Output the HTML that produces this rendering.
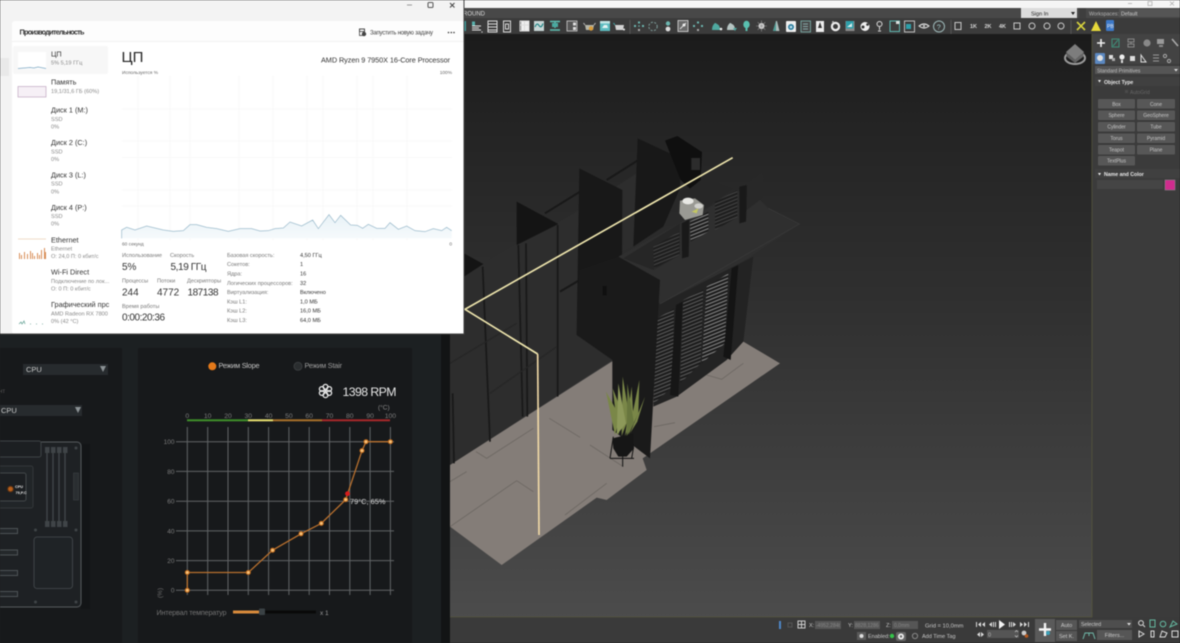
<!DOCTYPE html>
<html><head><meta charset="utf-8"><style>
html,body{margin:0;padding:0;width:1180px;height:643px;overflow:hidden;background:#222}
svg{display:block;filter:blur(.4px)}
text{font-family:"Liberation Sans",sans-serif}
</style></head><body>
<svg width="1180" height="643" viewBox="0 0 1180 643" xmlns="http://www.w3.org/2000/svg">
<defs>
<linearGradient id="vp" x1="0" y1="0" x2="0" y2="1"><stop offset="0" stop-color="#1b1b1b"/><stop offset=".156" stop-color="#242424"/><stop offset=".465" stop-color="#303030"/><stop offset="1" stop-color="#4c4c4c"/></linearGradient>
<pattern id="lv" width="14" height="10" patternUnits="userSpaceOnUse" patternTransform="rotate(-22)"><rect width="14" height="10" fill="#1c1c1c"/><rect y="3" width="14" height="3" fill="#5e5e5e"/></pattern>
<pattern id="lvb" width="14" height="10" patternUnits="userSpaceOnUse" patternTransform="rotate(-22)"><rect width="14" height="10" fill="#1c1c1c"/><rect y="3" width="14" height="3" fill="#8c8c8c"/></pattern>
<pattern id="lv2" width="14" height="10" patternUnits="userSpaceOnUse" patternTransform="rotate(-22)"><rect width="14" height="10" fill="#1e1e1e"/><rect y="3" width="14" height="3" fill="#464646"/></pattern>
<linearGradient id="cpuf" x1="0" y1="0" x2="0" y2="1"><stop offset="0" stop-color="#e8f2f7"/><stop offset="1" stop-color="#f6fafc"/></linearGradient>
</defs>

<!-- VIEWPORT -->
<rect x="450" y="34" width="642" height="583" fill="url(#vp)"/>
<g transform="translate(450,130) scale(.33333)">
 <polygon points="0,600 0,1005 487,690 380,615 388,420 550,350 560,130 388,240 320,280 200,340 100,400 42,440" fill="#2d2d2d"/>
 <polygon points="0,1005 485,695 880,635 990,700 578,985 590,1020 470,1110 440,1103 155,1305 0,1190" fill="#847d78"/>
 <g fill="none" stroke="#6c6762" stroke-width="2.500">
  <path d="M78,965 L110,985 L250,895"/><path d="M298,865 L390,922"/><path d="M420,945 L520,1010"/><path d="M200,1052 L250,1085"/><path d="M200,1052 L0,1190"/><path d="M612,890 L675,878"/><path d="M770,735 L815,748 L880,700"/><path d="M0,1055 L50,1025"/><path d="M345,1155 L470,1060"/>
 </g>
 <!-- fins/door lines -->
 <polygon points="200,215 325,282 200,345" fill="#141414"/>
 <polygon points="42,370 100,402 42,440" fill="#141414"/>
 <path d="M285,250 L390,185 M470,150 L565,90 M330,485 L440,420" stroke="#181818" stroke-width="6" fill="none"/>
 <path d="M323,285 L323,800 M205,345 L218,860 M228,340 L232,860 M98,410 L120,935 M8,790 L12,1000" stroke="#181818" stroke-width="5" fill="none"/>
 <path d="M0,700 L200,580 M120,790 L320,650" stroke="#262626" stroke-width="4" fill="none"/>
 <polygon points="388,115 517,180 515,690 380,615" fill="#181818"/>
 <polygon points="563,25 692,85 690,175 640,290 550,350" fill="#181818"/>
 <!-- wall under slab -->
 <polygon points="620,520 870,400 910,380 880,635 830,690 680,800 610,830" fill="#232323"/>
 <polygon points="622,565 672,535 668,770 610,822" fill="url(#lv)"/>
 <polygon points="700,510 760,478 752,700 690,760" fill="url(#lv)"/>
 <polygon points="770,470 835,430 825,640 755,700" fill="url(#lvb)"/>
 <polygon points="845,415 865,405 842,690 820,680" fill="#141414"/>
 <polygon points="678,525 698,515 685,800 660,795" fill="#161616"/>
 <!-- balcony floor -->
 <polygon points="690,185 760,145 850,175 780,225 690,265" fill="#272727"/>
 <!-- slab -->
 <polygon points="505,380 890,170 955,235 1048,282 870,400 630,522" fill="#2f2f2f"/>
 <path d="M955,235 L1048,282 L630,522" fill="none" stroke="#3b3b3b" stroke-width="2"/>
 <!-- parapets -->
 <polygon points="520,385 690,280 690,375 610,420" fill="#262626"/>
 <polygon points="720,275 775,245 775,305 722,335" fill="url(#lvb)"/>
 <polygon points="795,215 862,180 862,262 795,300" fill="url(#lv2)"/>
 <polygon points="610,350 688,305 688,375 612,415" fill="url(#lv2)"/>
 <polygon points="695,280 718,268 716,380 696,385" fill="#191919"/>
 <polygon points="868,170 892,165 888,275 868,280" fill="#191919"/>
 <polygon points="890,165 938,125 936,205 890,240" fill="#282828"/>
 <!-- pillar -->
 <polygon points="505,380 630,450 600,985 487,900 487,690 380,615 388,420" fill="#1a1a1a"/>
 <rect x="458" y="468" width="12" height="28" fill="#101010"/>
 <!-- PC -->
 <polygon points="645,32 682,18 756,66 752,150 720,176 692,150" fill="#0f0f0f"/>
 <rect x="724" y="84" width="26" height="36" fill="#333" opacity=".8"/>
 <!-- white box -->
 <polygon points="690,212 735,205 762,225 758,255 705,270 688,250" fill="#9a9a94"/>
 <ellipse cx="714" cy="213" rx="17" ry="10" fill="#e8e8e4"/>
 <ellipse cx="746" cy="228" rx="13" ry="8" fill="#d0d0cc"/>
 <polygon points="725,245 745,235 740,250" fill="#c4c860"/>
 <!-- plant -->
 <path d="M490,920 L480,985 M550,955 L545,985 M518,975 L518,1010 M480,985 L552,985" stroke="#111" stroke-width="3" fill="none"/>
 <polygon points="487,925 550,910 552,955 530,980 505,980 490,955" fill="#161616"/>
 <g fill="#7a8748">
  <polygon points="495,915 468,785 510,860"/><polygon points="505,915 488,775 522,860"/><polygon points="515,918 518,740 538,860"/>
  <polygon points="525,918 545,770 550,860"/><polygon points="535,915 568,750 565,850"/><polygon points="540,910 585,800 562,875"/>
  <polygon points="500,915 505,760 528,880" fill="#8d995a"/><polygon points="530,918 532,760 552,880" fill="#68763e"/>
 </g>
 <!-- beam line -->
 <polyline points="848,83 45,538 263,672" fill="none" stroke="#efe6ae" stroke-width="5"/>
 <polyline points="263,672 267,1215" fill="none" stroke="#efd8a6" stroke-width="5"/>
</g>

<!-- ViewCube -->
<ellipse cx="1075" cy="58" rx="10" ry="6" fill="none" stroke="#9a9a9a" stroke-width="2"/>
<polygon points="1075,44 1084,52 1075,60 1066,52" fill="#7d7d7d"/>
<polygon points="1066,52 1075,60 1075,63 1067,57" fill="#5e5e5e"/><polygon points="1084,52 1075,60 1075,63 1083,57" fill="#666"/>

<!-- TOP BARS -->
<rect x="450" y="0" width="730" height="8" fill="#f5f5f5"/>
<rect x="450" y="8" width="730" height="10" fill="#484848"/>
<rect x="450" y="18" width="730" height="16" fill="#3b3b3b"/>
<text x="463" y="15.5" font-size="6" fill="#d8d8d8">ROUND</text>
<rect x="1021" y="8" width="56" height="10" fill="#dcdcdc"/>
<text x="1031" y="15.5" font-size="5.6" fill="#222">Sign In</text>
<polygon points="1071,12 1075,12 1073,15" fill="#222"/>
<rect x="1079" y="8" width="7" height="10" fill="#3e3e3e"/>
<text x="1089" y="15.5" font-size="5.2" fill="#b8b8b8">Workspaces:</text>
<rect x="1119" y="9" width="61" height="8" fill="#555"/>
<text x="1121" y="15.5" font-size="5.2" fill="#ccc">Default</text>
<rect x="1148" y="1.5" width="4" height="4" fill="none" stroke="#aaa" stroke-width=".7"/>
<path d="M1170,1.5 l4,4 M1174,1.5 l-4,4 M1128,3.5 h4" stroke="#aaa" stroke-width=".7"/>

<!-- toolbar icons -->
<g>
 <rect x="460" y="21" width="6" height="10" fill="#3f9a98"/>
 <rect x="472" y="21.5" width="3" height="4" fill="#58b0ac"/><path d="M472,26 h9 M472,28 h7 M472,30 h9" stroke="#e8e8e8" stroke-width="1.1"/>
 <circle cx="482" cy="32" r=".6" fill="#eee"/>
 <g fill="none" stroke="#dcdcdc" stroke-width="1">
  <rect x="488" y="21" width="9" height="11"/><path d="M488,24 h9 M488,27 h9 M488,30 h9"/>
  <rect x="503.5" y="21" width="7" height="11"/><rect x="505.5" y="24" width="3" height="5"/>
  <rect x="520" y="21" width="9" height="10" fill="#444"/><path d="M524.5,21 v10 M520,25 h9"/>
 </g>
 <rect x="521" y="21.5" width="3" height="3" fill="#eee"/><rect x="525" y="21.5" width="3.5" height="3" fill="#eee"/><rect x="521" y="25.5" width="3" height="5" fill="#eee"/><rect x="525" y="25.5" width="3.5" height="5" fill="#eee"/>
 <rect x="534" y="21" width="10" height="10" fill="#c8d6d6"/><path d="M535,27 q2,-5 4,-1.5 t4,-2" stroke="#178080" fill="none" stroke-width="1.1"/>
 <path d="M550,21.5 h10 M555,22 v6 M550,30 h10" stroke="#5ec0b4" stroke-width="1.4"/><rect x="552" y="23" width="6" height="4" fill="#4aa9a0"/>
 <rect x="567" y="21" width="10" height="10" fill="#565656" stroke="#cfcfcf" stroke-width=".8"/><rect x="573" y="22.5" width="3" height="3" fill="#ddd"/><rect x="573" y="27" width="3" height="3" fill="#ddd"/>
 <path d="M585,25 h9 l-1,5 h-7z" fill="#b5b5a8"/><circle cx="591" cy="28.5" r="2.2" fill="#d89c3a"/><path d="M585,25 l-1.5,-2 M594,25 l1.5,-2" stroke="#bbb"/>
 <rect x="600" y="21" width="10" height="10" fill="#5cbcc0"/><rect x="600" y="21" width="10" height="2.5" fill="#bfe4e4"/><path d="M602,28 h6 l-1,-3 h-3z" fill="#e4f3f3"/>
 <path d="M615,25 h9 l-1,5 h-7z" fill="#d4d4d4"/><path d="M615,25 l-1.5,-2" stroke="#4aa"/><circle cx="624" cy="29.5" r="1" fill="#eee"/>
 <path d="M630,20 v14" stroke="#555"/>
 <g fill="#6cb6b0">
  <rect x="638" y="21.5" width="2" height="2"/><rect x="634" y="25" width="2" height="2"/><rect x="642" y="25" width="2" height="2"/><rect x="638" y="29" width="2" height="2" fill="#aaa"/><circle cx="639" cy="26" r=".8"/>
  <circle cx="668" cy="23.5" r="2.2"/><circle cx="668" cy="29" r="2.4" fill="#ddd"/>
  <rect x="697" y="21.5" width="2" height="2"/><rect x="693" y="25" width="2" height="2"/><rect x="701" y="25" width="2" height="2"/><rect x="697" y="29" width="2" height="2" fill="#aaa"/>
 </g>
 <circle cx="653" cy="26.5" r="4.2" fill="none" stroke="#7f9f9c" stroke-dasharray="2 1.5"/>
 <rect x="678" y="20.5" width="10" height="11" fill="#6a6a6a" stroke="#ddd" stroke-width=".8"/><path d="M680,29 l6,-6" stroke="#ddd"/><circle cx="684" cy="25" r="1.5" fill="#eee"/>
 <path d="M712,30 q0,-4 2,-6 q1,-2 3,0 q3,1 3,6z" fill="#4fa9a0"/><circle cx="721" cy="29" r="1.3" fill="#eee"/>
 <path d="M727,30 q0,-4 2,-6 q1,-2 3,0 q3,1 3,6z" fill="#b5c4c2"/><path d="M733,28 l4,0 -2,3z" fill="#4fa9a0"/>
 <ellipse cx="746.5" cy="24.5" rx="3.2" ry="3.8" fill="#59c0b0"/><rect x="745.5" y="28" width="2" height="3" fill="#59c0b0"/>
 <circle cx="761.5" cy="26" r="3" fill="#e4e4e4"/><path d="M761.5,20.5 v11 M756,26 h11 M757.7,22.2 l7.6,7.6 M765.3,22.2 l-7.6,7.6" stroke="#999" stroke-width=".6"/>
 <path d="M773,31 l3,-10 l1,0 l2.5,10z" fill="#aebdbb"/><path d="M773,31 l3,-10 v10z" fill="#4b9a93"/>
 <rect x="786" y="21" width="10" height="11" fill="#eee" rx="1"/><circle cx="791" cy="27" r="3" fill="#2f7f9f"/><circle cx="791" cy="27" r="1.3" fill="#bfe0ee"/>
 <rect x="801" y="21" width="9.5" height="11" fill="#484848" stroke="#7fb5ae" stroke-width=".8"/><path d="M803,24 h5 M803,26.5 h5 M803,29 h5" stroke="#8aa"/>
 <path d="M816,21 h8 v11 h-8z" fill="#eee"/><path d="M820,22 l2,6 h-4z" fill="#333"/>
 <circle cx="835.5" cy="26.5" r="3.6" fill="none" stroke="#eee" stroke-width="2.2"/><circle cx="833" cy="22" r="1" fill="#bbb"/>
 <rect x="845.5" y="21" width="9" height="10" fill="#8a8a8a"/><rect x="846" y="21" width="7.5" height="7.5" fill="#2d9faa"/><path d="M847,27 l5,-4 v4z" fill="#d8eeee"/>
 <circle cx="865" cy="26.5" r="4.5" fill="#eee"/><circle cx="863" cy="27" r="1.5" fill="#333"/><circle cx="867.5" cy="24.5" r="1.3" fill="#333"/>
 <circle cx="879.5" cy="24" r="2.5" fill="none" stroke="#ddd"/><path d="M879.5,27 v3 M878,31 h3" stroke="#ddd"/>
 <rect x="890" y="21" width="9.5" height="10.5" fill="#3d3d3d" stroke="#5db5ae"/><rect x="896" y="21" width="3.5" height="3" fill="#ddd"/>
 <rect x="904.5" y="21" width="10" height="11" fill="none" stroke="#ddd" stroke-width=".8"/><rect x="906" y="24" width="5" height="5" fill="#2d9faa"/>
 <path d="M919,26 q5,-4 10,0 q-5,4 -10,0z" fill="none" stroke="#ddd" stroke-width="1.1"/><circle cx="924" cy="26" r="1" fill="#ddd"/>
 <circle cx="939" cy="26.5" r="5.5" fill="none" stroke="#9db8b8"/><text x="936.6" y="29.5" font-size="7.5" fill="#9fc8c8">?</text>
 <path d="M951,20 v14" stroke="#555"/>
 <g font-size="5.5" fill="#d8d8d8" font-weight="bold">
  <text x="970" y="28">1K</text><text x="984.5" y="28">2K</text><text x="999" y="28">4K</text>
 </g>
 <g fill="none" stroke="#c8c8c8">
  <rect x="955" y="22.5" width="6" height="7"/><rect x="1014" y="23" width="6" height="6"/>
  <circle cx="1032" cy="26" r="3"/><circle cx="1047" cy="26" r="3"/><circle cx="1061" cy="26" r="3"/>
 </g>
 <path d="M1071,20 v14" stroke="#555"/>
 <path d="M1077,22 l8,8 M1085,22 l-8,8" stroke="#d6d23e" stroke-width="1.6"/>
 <polygon points="1096,21 1101,31 1091,31" fill="#e6d83a"/>
 <rect x="1106" y="20" width="8" height="11" rx="1" fill="#3c78c8"/><text x="1107" y="28" font-size="5" fill="#eee">PB</text>
</g>

<!-- RIGHT PANEL -->
<rect x="1092" y="34" width="88" height="583" fill="#3b3b3b"/>
<rect x="1092" y="34" width="88" height="30" fill="#434343"/>
<path d="M1097,43 h8 M1101,39 v8" stroke="#f0f0f0" stroke-width="1.6"/>
<rect x="1112" y="39" width="7" height="8" fill="none" stroke="#3f8f7a"/><path d="M1113,46 l5,-6" stroke="#3f8f7a"/>
<path d="M1128,39 h6 v3 h-6z M1131,42 v2 M1128,44 h6 v3 h-6z" fill="none" stroke="#888"/>
<circle cx="1147" cy="43" r="3.6" fill="#888"/>
<rect x="1157" y="39" width="7" height="5" fill="#999"/><rect x="1159" y="45" width="4" height="2" fill="#888"/>
<path d="M1172,39 l6,7" stroke="#aaa" stroke-width="1.6"/>
<rect x="1095" y="53" width="10" height="11" rx="1" fill="#5b88c0"/><circle cx="1100" cy="58" r="3" fill="#e0e0e0"/>
<rect x="1109" y="55" width="4" height="4" fill="#ddd"/><rect x="1112" y="58" width="3" height="3" fill="#aaa"/>
<circle cx="1122" cy="57" r="2.6" fill="#eee"/><rect x="1121" y="60" width="2" height="3" fill="#ddd"/>
<rect x="1130" y="56" width="5" height="5" fill="#ddd"/>
<path d="M1141,62 v-7 l5,7z" fill="none" stroke="#ddd"/>
<path d="M1153,55 h6 M1153,58 h6 M1153,61 h6" stroke="#999"/>
<circle cx="1165" cy="56" r="1.6" fill="none" stroke="#aaa"/><circle cx="1169" cy="61" r="1.6" fill="none" stroke="#aaa"/>
<rect x="1095" y="66" width="85" height="8" fill="#555"/>
<text x="1097" y="72.3" font-size="5" fill="#c0c0c0">Standard Primitives</text>
<polygon points="1174,69 1178,69 1176,71.5" fill="#ddd"/>
<rect x="1095" y="77" width="85" height="9" fill="#404040"/>
<polygon points="1098,80 1101,80 1099.5,82.5" fill="#eee"/>
<text x="1104" y="84" font-size="5.2" font-weight="bold" fill="#e8e8e8">Object Type</text>
<rect x="1125" y="90" width="3" height="3" fill="#4a4a4a"/>
<text x="1130" y="94" font-size="5" fill="#666">AutoGrid</text>
<g fill="#575757">
 <rect x="1098" y="99" width="37" height="9.5" rx="1"/><rect x="1137" y="99" width="38" height="9.5" rx="1"/>
 <rect x="1098" y="110.5" width="37" height="9.5" rx="1"/><rect x="1137" y="110.5" width="38" height="9.5" rx="1"/>
 <rect x="1098" y="122" width="37" height="9.5" rx="1"/><rect x="1137" y="122" width="38" height="9.5" rx="1"/>
 <rect x="1098" y="133.5" width="37" height="9.5" rx="1"/><rect x="1137" y="133.5" width="38" height="9.5" rx="1"/>
 <rect x="1098" y="145" width="37" height="9.5" rx="1"/><rect x="1137" y="145" width="38" height="9.5" rx="1"/>
 <rect x="1098" y="156" width="37" height="9.5" rx="1"/>
</g>
<g font-size="5" fill="#c8c8c8" text-anchor="middle">
 <text x="1116.5" y="106">Box</text><text x="1156" y="106">Cone</text>
 <text x="1116.5" y="117">Sphere</text><text x="1156" y="117">GeoSphere</text>
 <text x="1116.5" y="128.5">Cylinder</text><text x="1156" y="128.5">Tube</text>
 <text x="1116.5" y="140">Torus</text><text x="1156" y="140">Pyramid</text>
 <text x="1116.5" y="151.5">Teapot</text><text x="1156" y="151.5">Plane</text>
 <text x="1116.5" y="162.5">TextPlus</text>
</g>
<rect x="1095" y="169" width="85" height="9" fill="#404040"/>
<polygon points="1098,173 1101,173 1099.5,175.5" fill="#eee"/>
<text x="1104" y="176" font-size="5.2" font-weight="bold" fill="#e8e8e8">Name and Color</text>
<rect x="1097" y="180" width="66" height="9" fill="#454545"/>
<rect x="1165" y="180" width="10" height="10" fill="#d02c8e" stroke="#888" stroke-width=".6"/>

<!-- STATUS BAR -->
<rect x="450" y="617" width="730" height="26" fill="#3a3a3a"/>
<path d="M450,617 H1092 V34" fill="none" stroke="#56563c" stroke-width=".8"/>
<rect x="779" y="621" width="2" height="8" fill="#4f86c6"/>
<rect x="788" y="623" width="4" height="4" fill="none" stroke="#555"/>
<rect x="798" y="621" width="7" height="7" fill="none" stroke="#ccc"/><path d="M801.5,621 v7 M798,624.5 h7" stroke="#ccc"/>
<g font-size="5.5" fill="#c8c8c8">
 <text x="809" y="627">X:</text><text x="848" y="627">Y:</text><text x="886" y="627">Z:</text>
 <text x="925" y="627.5" font-size="5.8">Grid = 10,0mm</text>
 <text x="868" y="638">Enabled:</text><text x="922" y="638">Add Time Tag</text>
</g>
<g fill="#565656"><rect x="815" y="621" width="26" height="8"/><rect x="854" y="621" width="26" height="8"/><rect x="892" y="621" width="26" height="8"/></g>
<g font-size="5" fill="#888"><text x="816" y="627">-4952,284t</text><text x="855" y="627">8828,1286</text><text x="894" y="627">0,0mm</text></g>
<rect x="857" y="632" width="9" height="8" fill="#5a5a5a"/><circle cx="861.5" cy="636" r="2" fill="#ddd"/>
<circle cx="892" cy="636" r="2.2" fill="#35c24a"/>
<rect x="896" y="632" width="10" height="9" rx="2" fill="#666"/><circle cx="901" cy="636.5" r="3" fill="#eee"/><circle cx="901" cy="636.5" r="1.2" fill="#666"/>
<circle cx="915" cy="636" r="2.6" fill="none" stroke="#888"/>
<g fill="#ddd">
 <path d="M976,622 h1 v5 h-1z M978,624.5 l3,-2.5 v5z M985,622 v5 l-3,-2.5z"/>
 <path d="M989,624.5 l3,-2.5 v5z M993,622 h1 v5 h-1z M995,622 h1 v5 h-1z"/>
 <polygon points="999,620 1005,624.5 999,629" fill="#f2f2f2"/>
 <path d="M1009,622 h1 v5 h-1z M1011,622 h1 v5 h-1z M1013,622 l3,2.5 -3,2.5z"/>
 <path d="M1020,622 v5 l3,-2.5z M1024,622 l3,2.5 -3,2.5z M1028,622 h1 v5 h-1z"/>
 <path d="M977,634.5 l3,-2.5 v5z M981,632 l3,2.5 -3,2.5z"/>
</g>
<rect x="987" y="630" width="32" height="8" fill="#555"/>
<text x="988" y="636.5" font-size="5.5" fill="#bbb">0</text>
<path d="M1015,632 l1.5,-1.5 1.5,1.5 M1015,635.5 l1.5,1.5 1.5,-1.5" stroke="#ccc" fill="none" stroke-width=".7"/>
<circle cx="1024" cy="633" r="2.4" fill="#ccc"/><circle cx="1026.5" cy="636" r="1.8" fill="#b85a20"/>
<rect x="1035" y="619" width="20" height="23" fill="#5a5a5a"/>
<path d="M1039,629.5 h12 M1045,623 v13" stroke="#f4f4f4" stroke-width="2.4"/>
<circle cx="1048" cy="633" r="2" fill="#3aa0b8"/>
<g fill="#565656"><rect x="1056" y="620" width="21" height="10"/><rect x="1056" y="631" width="21" height="10"/><rect x="1097" y="630" width="35" height="10"/></g>
<rect x="1079" y="620" width="53" height="8" fill="#4e4e4e"/>
<text x="1066.5" y="627" font-size="5.5" fill="#ccc" text-anchor="middle">Auto</text>
<text x="1066.5" y="638" font-size="5.5" fill="#ccc" text-anchor="middle">Set K.</text>
<text x="1081" y="626" font-size="5.2" fill="#ccc">Selected</text>
<polygon points="1127,623 1131,623 1129,625.5" fill="#ddd"/>
<text x="1114.5" y="637" font-size="5.5" fill="#ccc" text-anchor="middle">Filters...</text>
<path d="M1083,639 l2,-6 h8 l2,6 M1089,633 v3" fill="none" stroke="#6fb8a8"/>
<g fill="none" stroke="#ddd">
 <circle cx="1141" cy="623" r="2.4"/><path d="M1143,625 l2,2"/>
 <path d="M1150,620 h5 v7 h-5z" stroke="#65b8a0"/><circle cx="1163" cy="624" r="2.8" stroke="#65b8a0"/><path d="M1170,627 l3,-6 4,3z" stroke="#65b8a0"/>
 <path d="M1139,631 l5,3 -5,3z"/><path d="M1151,631 v6 h3 v-6z"/><path d="M1160,637 l2,-6 5,2 -2,4z"/><rect x="1172" y="631" width="6" height="6"/>
</g>

<!-- LEFT BOTTOM PANEL -->
<rect x="0" y="334" width="450" height="309" fill="#1c2022"/>
<rect x="0" y="348" width="122" height="295" fill="#17191b"/>
<rect x="138" y="348" width="274" height="295" fill="#17191b"/>
<rect x="441" y="334" width="9" height="309" fill="#121415"/>
<rect x="23" y="364" width="85" height="11" fill="#272b2e"/>
<text x="26" y="372" font-size="7.5" fill="#c9c9c9">CPU</text>
<polygon points="100,366 106,366 103,372" fill="#8b9194"/>
<text x="-1" y="393" font-size="6" fill="#555">нт</text>
<rect x="0" y="405" width="82" height="11" fill="#272b2e"/>
<text x="1" y="413" font-size="7.5" fill="#c9c9c9">CPU</text>
<polygon points="75,407 81,407 78,413" fill="#8b9194"/>
<!-- motherboard -->
<rect x="81" y="444" width="9" height="165" fill="#131517"/>
<rect x="-10" y="442" width="91" height="165" rx="4" fill="#1e2124" stroke="#565b5e" stroke-width="1"/>
<rect x="-6" y="441" width="47" height="16" rx="2" fill="#1c1f22" stroke="#3e4346"/>
<rect x="-6" y="466" width="39" height="42" rx="2" fill="#212528" stroke="#333739"/>
<rect x="-6" y="473" width="32" height="28" rx="2" fill="#1c1f22" stroke="#42474a"/>
<circle cx="10.5" cy="489" r="2.8" fill="#b8601c" stroke="#5d3212" stroke-width="1"/>
<text x="15" y="488" font-size="3.8" fill="#e8e8e8" font-weight="bold">CPU</text>
<text x="15.5" y="494" font-size="3.8" fill="#e8e8e8" font-weight="bold">79,P.C</text>
<g stroke="#43484b" fill="none">
 <path d="M47,447 V526 M53,447 V526 M59,447 V526 M65,447 V526" stroke-width="1.3"/>
</g>
<g fill="#3f4447">
 <rect x="45" y="447" width="4.5" height="6"/><rect x="51" y="447" width="4.5" height="6"/><rect x="57" y="447" width="4.5" height="6"/><rect x="63" y="447" width="4.5" height="6"/>
 <rect x="45" y="521" width="4.5" height="6"/><rect x="51" y="521" width="4.5" height="6"/><rect x="57" y="521" width="4.5" height="6"/><rect x="63" y="521" width="4.5" height="6"/>
 <circle cx="76" cy="448" r="1.5"/><circle cx="76" cy="530" r="1.5"/><circle cx="35.5" cy="530" r="1.5"/><circle cx="35.5" cy="602" r="1.5"/><circle cx="76" cy="602" r="1.5"/>
</g>
<rect x="73.5" y="473" width="5" height="27" fill="#2a2e31" stroke="#3f4447" stroke-width=".5"/>
<g fill="#24282b" stroke="#4d5255" stroke-width="1">
 <rect x="-5" y="528.5" width="22.5" height="5"/><rect x="-5" y="550" width="22.5" height="5"/><rect x="-5" y="570.5" width="22.5" height="5"/><rect x="-5" y="591.5" width="22.5" height="5"/>
</g>
<rect x="34" y="537" width="38.5" height="51.5" rx="3" fill="#1f2326" stroke="#474c50" stroke-width=".8"/>

<!-- Mode -->
<circle cx="212.3" cy="366.3" r="4" fill="#e4791a"/>
<text x="218.5" y="368" font-size="7.3" fill="#c4c4c4" textLength="41">Режим Slope</text>
<circle cx="298" cy="366.3" r="4" fill="#2a2d2f" stroke="#3a3d3f"/>
<text x="304.5" y="368" font-size="7.3" fill="#9c9c9c" textLength="37.5">Режим Stair</text>
<!-- fan -->
<g fill="none" stroke="#ededed" stroke-width="1.3">
 <circle cx="325.5" cy="386.8" r="2.4"/><circle cx="325.5" cy="395.2" r="2.4"/><circle cx="321.8" cy="389" r="2.4"/><circle cx="329.2" cy="389" r="2.4"/><circle cx="321.8" cy="393" r="2.4"/><circle cx="329.2" cy="393" r="2.4"/>
</g>
<circle cx="325.5" cy="391" r="1.2" fill="#ededed"/>
<text x="342.5" y="396" font-size="12.3" fill="#e6e6e6" textLength="54">1398 RPM</text>

<!-- chart -->
<text x="378" y="409.5" font-size="6.5" fill="#8a8a8a">(°C)</text>
<g font-size="6.8" fill="#7c7c7c" text-anchor="middle">
 <text x="187.3" y="418">0</text><text x="207.7" y="418">10</text><text x="228" y="418">20</text><text x="248.3" y="418">30</text><text x="268.6" y="418">40</text><text x="288.9" y="418">50</text><text x="309.2" y="418">60</text><text x="329.5" y="418">70</text><text x="349.8" y="418">80</text><text x="370.1" y="418">90</text><text x="390.4" y="418">100</text>
</g>
<rect x="187" y="419.3" width="61" height="2" fill="#3f8f2a"/>
<rect x="248" y="419.3" width="25" height="2" fill="#e8e070"/>
<rect x="273" y="419.3" width="49" height="2" fill="#a8702a"/>
<rect x="322" y="419.3" width="68" height="2" fill="#a8282a"/>
<g stroke="#626567" stroke-width="1">
 <path d="M187.3,427V595M207.7,427V595M228,427V595M248.3,427V595M268.6,427V595M288.9,427V595M309.2,427V595M329.5,427V595M349.8,427V595M370.1,427V595M390.4,427V595"/>
 <path d="M176,441.7H394M176,471.4H394M176,501.2H394M176,530.9H394M176,560.6H394M176,590.3H394"/>
</g>
<g font-size="6.5" fill="#7c7c7c" text-anchor="end">
 <text x="174.5" y="444">100</text><text x="174.5" y="473.8">80</text><text x="174.5" y="503.5">60</text><text x="174.5" y="533.3">40</text><text x="174.5" y="563">20</text><text x="174.5" y="592.7">0</text>
</g>
<text transform="translate(162,598) rotate(-90)" font-size="6.5" fill="#6a6a6a">(%)</text>
<polyline points="187.3,590.3 187.3,572.5 248.3,572.5 272.6,550.2 301,533.8 321.3,523.4 345.7,499.6 362,450.6 366,441.7 390.4,441.7" fill="none" stroke="#b8702e" stroke-width="1.3"/>
<g fill="#f6c27a" stroke="#c36a1a" stroke-width="1">
 <circle cx="187.3" cy="590.3" r="2"/><circle cx="187.3" cy="572.5" r="2"/><circle cx="248.3" cy="572.5" r="2"/><circle cx="272.6" cy="550.2" r="2"/><circle cx="301" cy="533.8" r="2"/><circle cx="321.3" cy="523.4" r="2"/><circle cx="345.7" cy="499.6" r="2"/><circle cx="362" cy="450.6" r="2"/><circle cx="366" cy="441.7" r="2"/><circle cx="390.4" cy="441.7" r="2"/>
</g>
<circle cx="347.5" cy="493.7" r="2.4" fill="#d81c1c"/>
<text x="350" y="504" font-size="7.4" fill="#dcdcdc">79°C, 65%</text>
<!-- slider -->
<text x="156.5" y="615" font-size="7.2" fill="#747474" textLength="70">Интервал температур</text>
<rect x="233" y="610.5" width="83" height="3" fill="#0a0a0a"/>
<rect x="233" y="610.5" width="27" height="3" fill="#d88a3c"/>
<rect x="259" y="608.5" width="6" height="6.5" rx="1" fill="#3a4144"/>
<text x="320" y="615" font-size="6.5" fill="#9a9a9a">x 1</text>

<!-- TASK MANAGER -->
<rect x="0" y="0" width="464" height="334" fill="#f3f3f3"/>
<rect x="0" y="58" width="9" height="18" fill="#e9e9e9"/>
<rect x="12" y="21" width="452" height="313" rx="3" fill="#fff"/>
<rect x="12" y="21" width="452" height="20" rx="3" fill="#fdfdfd"/>
<path d="M12,41.5 H464" stroke="#f2f2f2"/>
<path d="M464,0 V334 H0" stroke="#444" stroke-width="1" fill="none"/>
<path d="M407,5 h5" stroke="#999"/><rect x="428" y="2.5" width="5" height="5" rx="1" fill="none" stroke="#555"/><path d="M450,3 l4.5,4.5 M454.5,3 l-4.5,4.5" stroke="#444"/>
<text x="19.5" y="34.5" font-size="7.3" font-weight="bold" fill="#333" textLength="65">Производительность</text>
<g fill="none" stroke="#444" stroke-width=".8"><rect x="359.5" y="29" width="5" height="6.5"/><rect x="359.5" y="29" width="5" height="2.5"/><circle cx="364" cy="34" r="1.8" fill="#444"/></g>
<text x="370" y="34.3" font-size="6" fill="#444" textLength="63">Запустить новую задачу</text>
<g fill="#333"><circle cx="448.5" cy="32.5" r=".8"/><circle cx="451.3" cy="32.5" r=".8"/><circle cx="454" cy="32.5" r=".8"/></g>

<!-- sidebar -->
<rect x="13" y="46" width="95" height="28" rx="2" fill="#f7f7f7"/>
<rect x="18" y="52" width="28" height="17" fill="#fff"/>
<polyline points="18,68.5 24,68 30,67.5 34,68 38,67 46,68.5" fill="none" stroke="#7ea9c4" stroke-width=".7"/>
<rect x="18" y="86.5" width="28" height="10.5" fill="#f6f0f6" stroke="#b79ab8" stroke-width=".6"/>
<path d="M18,239 H46" stroke="#f1dcc8"/>
<g fill="#d88c55">
 <rect x="19" y="253" width="1" height="6"/><rect x="21" y="255" width="1" height="4"/><rect x="24" y="252" width="1" height="7"/><rect x="27" y="254" width="1" height="5"/><rect x="30" y="251" width="1" height="8"/><rect x="32" y="253" width="1" height="6"/><rect x="34" y="256" width="1" height="3"/><rect x="37" y="253" width="1" height="6"/><rect x="39" y="255" width="1" height="4"/><rect x="41" y="250" width="1" height="9"/><rect x="44" y="248" width="1" height="11"/><rect x="45" y="252" width="1" height="7"/>
</g>
<path d="M19,324 l2,-2 1,2 2,-3 1,3 M30,324 h1 M36,324 h1 M42,324 h1" fill="none" stroke="#6fa89c" stroke-width=".8"/>
<g font-size="7.3" fill="#333">
 <text x="51" y="56.5">ЦП</text><text x="51" y="84.5">Память</text><text x="51" y="112.5">Диск 1 (M:)</text><text x="51" y="145">Диск 2 (C:)</text><text x="51" y="177.5">Диск 3 (L:)</text><text x="51" y="210">Диск 4 (P:)</text><text x="51" y="242.3">Ethernet</text><text x="51" y="274.7">Wi-Fi Direct</text><text x="51" y="307">Графический прс</text>
</g>
<g font-size="5.6" fill="#888">
 <text x="51" y="64.5">5% 5,19 ГГц</text><text x="51" y="93">19,1/31,6 ГБ (60%)</text>
 <text x="51" y="121">SSD</text><text x="51" y="128.5">0%</text>
 <text x="51" y="153.3">SSD</text><text x="51" y="161">0%</text>
 <text x="51" y="185.6">SSD</text><text x="51" y="193.3">0%</text>
 <text x="51" y="218">SSD</text><text x="51" y="225.7">0%</text>
 <text x="51" y="250.3">Ethernet</text><text x="51" y="258">О: 24,0 П: 0 кбит/с</text>
 <text x="51" y="283">Подключение по лок...</text><text x="51" y="290.5">О: 0 П: 0 кбит/с</text>
 <text x="51" y="315.3">AMD  Radeon RX 7800</text><text x="51" y="323">0% (42 °C)</text>
</g>

<!-- main -->
<text x="121.5" y="62" font-size="15" fill="#222">ЦП</text>
<text x="321" y="62.5" font-size="7.3" fill="#333" textLength="129">AMD Ryzen 9 7950X 16-Core Processor</text>
<text x="122" y="74" font-size="4.8" fill="#666" textLength="36">Используется %</text>
<text x="452" y="74" font-size="4.8" fill="#666" text-anchor="end">100%</text>
<g stroke="#f8f8f8" stroke-width=".8">
 <path d="M122,141H452M122,157.5H452M122,109H452M122,190H452M122,206H452"/>
 <path d="M138,76V240M170,76V240M190,76V240M239,76V240M273,76V240M307,76V240M323,76V240M357,76V240M373,76V240M407,76V240"/>
</g>
<g transform="translate(120,70) scale(.33333)">
 <polygon points="5,505 5,480 20,472 45,480 80,468 130,480 160,484 190,482 210,464 230,464 260,472 290,476 325,484 360,476 395,476 420,483 445,482 465,476 490,474 510,456 545,468 578,450 595,476 627,434 645,458 662,436 692,465 712,466 728,475 745,463 770,475 795,475 810,458 835,478 860,468 885,482 915,485 940,476 965,482 980,472 995,482 995,505" fill="url(#cpuf)"/>
 <polyline points="5,505 5,480 20,472 45,480 80,468 130,480 160,484 190,482 210,464 230,464 260,472 290,476 325,484 360,476 395,476 420,483 445,482 465,476 490,474 510,456 545,468 578,450 595,476 627,434 645,458 662,436 692,465 712,466 728,475 745,463 770,475 795,475 810,458 835,478 860,468 885,482 915,485 940,476 965,482 980,472 995,482" fill="none" stroke="#9dbccd" stroke-width="2.2"/>
</g>
<text x="122" y="245.5" font-size="4.8" fill="#666">60 секунд</text>
<text x="452" y="245.5" font-size="4.8" fill="#666" text-anchor="end">0</text>
<g font-size="5.6" fill="#777">
 <text x="122" y="257">Использование</text><text x="170" y="257">Скорость</text>
 <text x="122" y="282.5">Процессы</text><text x="157" y="282.5">Потоки</text><text x="187" y="282.5">Дескрипторы</text>
 <text x="122" y="308">Время работы</text>
 <text x="227" y="257">Базовая скорость:</text><text x="227" y="266.2">Сокетов:</text><text x="227" y="275.5">Ядра:</text><text x="227" y="285">Логических процессоров:</text><text x="227" y="294">Виртуализация:</text><text x="227" y="303.5">Кэш L1:</text><text x="227" y="312.5">Кэш L2:</text><text x="227" y="322">Кэш L3:</text>
</g>
<g font-size="10" fill="#333">
 <text x="122" y="270">5%</text><text x="170.5" y="270" textLength="36">5,19 ГГц</text>
 <text x="122" y="295.5">244</text><text x="157" y="295.5">4772</text><text x="187.5" y="295.5" textLength="31">187138</text>
 <text x="122" y="320.5" textLength="43">0:00:20:36</text>
</g>
<g font-size="5.6" fill="#333">
 <text x="300" y="257">4,50 ГГц</text><text x="300" y="266.2">1</text><text x="300" y="275.5">16</text><text x="300" y="285">32</text><text x="300" y="294">Включено</text><text x="300" y="303.5">1,0 МБ</text><text x="300" y="312.5">16,0 МБ</text><text x="300" y="322">64,0 МБ</text>
</g>
</svg>
</body></html>
